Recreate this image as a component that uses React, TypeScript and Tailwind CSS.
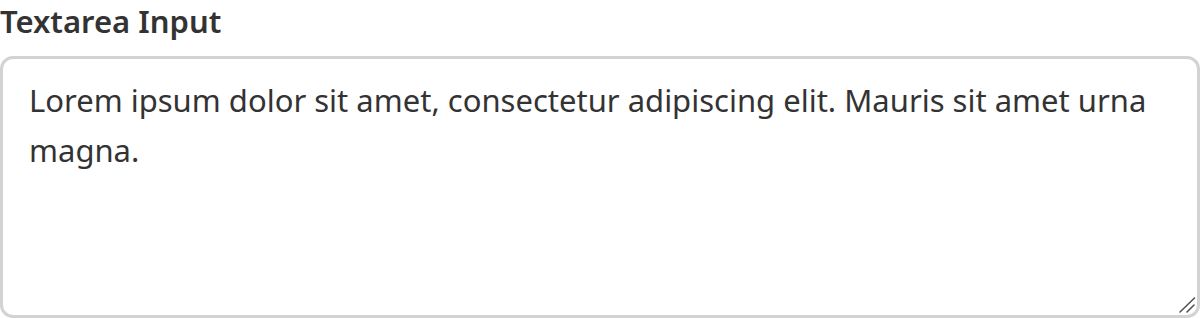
export default function App() {
  return (
    <div className="bg-white w-[1200px] h-[318px] overflow-hidden" style={{ fontFamily: '"Noto Sans", "Open Sans", sans-serif' }}>
      <label htmlFor="ta" className="block text-[31px] leading-[43px] font-semibold text-[#333] mb-[13px]">
        Textarea Input
      </label>
      <div className="relative w-[1200px] h-[262px]">
        <textarea
          id="ta"
          className="block w-full h-full resize-none border-[3px] border-[#d3d3d3] rounded-[13px] px-[26px] pt-[16px] text-[31px] leading-[50px] text-[#333] outline-none"
          defaultValue="Lorem ipsum dolor sit amet, consectetur adipiscing elit. Mauris sit amet urna magna."
        />
        <svg className="absolute left-[1176px] top-[240px] pointer-events-none" width="22" height="20" viewBox="0 0 22 20">
          <line x1="4" y1="16" x2="18.5" y2="2" stroke="#555" strokeWidth="1.6" strokeLinecap="round" />
          <line x1="11" y1="16" x2="18" y2="9" stroke="#555" strokeWidth="1.6" strokeLinecap="round" />
        </svg>
      </div>
    </div>
  );
}
